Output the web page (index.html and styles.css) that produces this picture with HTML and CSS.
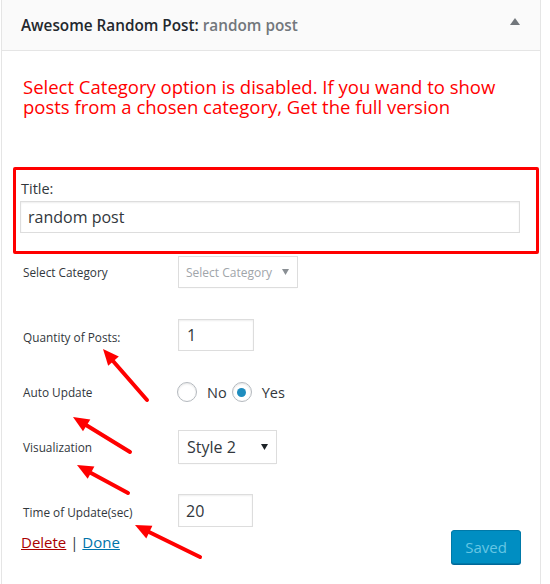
FILE: index.html
```html
<!DOCTYPE html>
<html lang="en">
<head>
<meta charset="utf-8">
<title>Awesome Random Post widget</title>
<link rel="stylesheet" href="styles.css">
</head>
<body>
<div class="widget">
  <div class="widget-top">
    <h3 class="widget-title">Awesome Random Post: <span class="in-title">random post</span></h3>
    <svg class="toggle" width="10" height="7" viewBox="0 0 10 7"><polygon points="5,0 10,7 0,7" fill="#72777c"/></svg>
  </div>
  <div class="widget-inside">
    <p class="notice">Select Category option is disabled. If you wand to show posts from a chosen category, Get the full version</p>

    <div class="title-field">
      <label class="title-label" for="t">Title:</label>
      <input id="t" class="text-input" type="text" value="random post">
    </div>

    <div class="fields">
      <div class="row row-cat">
        <span class="label">Select Category</span>
        <div class="select select-disabled">
          <span>Select Category</span>
          <svg class="caret" width="7" height="6" viewBox="0 0 7 6"><polygon points="0,0 7,0 3.5,6" fill="#8a8f94"/></svg>
        </div>
      </div>

      <div class="row row-qty">
        <span class="label label-low">Quantity of Posts:</span>
        <input class="num-input" type="text" value="1">
      </div>

      <div class="row row-auto">
        <span class="label">Auto Update</span>
        <div class="radios">
          <input class="radio" type="radio" name="au" id="no">
          <label class="radio-text" for="no">No</label>
          <input class="radio radio-yes" type="radio" name="au" id="yes" checked>
          <label class="radio-text" for="yes">Yes</label>
        </div>
      </div>

      <div class="row row-vis">
        <span class="label">Visualization</span>
        <div class="select select-style">
          <span>Style 2</span>
          <svg class="caret" width="7" height="6" viewBox="0 0 7 6"><polygon points="0,0 7,0 3.5,6" fill="#1d2327"/></svg>
        </div>
      </div>

      <div class="row row-time">
        <span class="label label-low">Time of Update(sec)</span>
        <input class="num-input num-time" type="text" value="20">
      </div>

      <div class="footer">
        <div class="links"><a class="delete" href="#">Delete</a> <span class="sep">|</span> <a class="done" href="#">Done</a></div>
        <button class="btn" type="button">Saved</button>
      </div>
    </div>
  </div>
</div>

<svg class="arrows" width="550" height="584" viewBox="0 0 550 584">
  <g stroke="#ff0000" stroke-width="4" stroke-linecap="round" fill="none">
    <line x1="147" y1="400" x2="113" y2="361"/>
    <line x1="130" y1="452" x2="86" y2="425"/>
    <line x1="128" y1="493" x2="91" y2="473"/>
    <line x1="200" y1="557" x2="149" y2="532"/>
  </g>
  <g fill="#ff0000">
    <polygon points="103,349 118.8,356.5 108.2,365.7"/>
    <polygon points="73,417 90.3,419.4 83,431.3"/>
    <polygon points="77,465 94.4,466.6 87.7,478.8"/>
    <polygon points="135,525 152.4,525.8 146.3,538.4"/>
  </g>
</svg>
</body>
</html>
```
FILE: styles.css
```css
* { box-sizing: border-box; }

body {
  margin: 0;
  background: #fff;
  font-family: "Open Sans", "Noto Sans", sans-serif;
  color: #32373c;
}

.widget {
  margin-left: 1px;
  width: 540px;
  min-height: 584px;
  border-left: 1px solid #e5e5e5;
  border-right: 1px solid #e5e5e5;
  background: #fff;
}

.widget-top {
  height: 51px;
  background: #fafafa;
  border-bottom: 1px solid #e5e5e5;
  display: flex;
  align-items: center;
  justify-content: space-between;
  padding: 0 20px 0 19px;
}

.widget-title {
  margin: 0;
  font-size: 15.3px;
  font-weight: 600;
  line-height: 20px;
  color: #23282d;
}

.in-title { color: #72777c; }

.toggle {
  display: block;
  margin-bottom: 7px;
}

.notice {
  margin: 26px 0 0;
  padding: 0 18px 0 21px;
  font-size: 18.5px;
  line-height: 20px;
  color: #ff0000;
}

.title-field {
  margin: 50px 0 0 11px;
  width: 526px;
  height: 87px;
  border: 3px solid #ff0000;
  border-radius: 2px;
  padding: 9px 0 0 4px;
}

.title-label {
  display: block;
  padding-left: 1px;
  font-size: 14.5px;
  line-height: 20px;
  color: #32373c;
}

.text-input {
  display: block;
  margin: 2px 0 0;
  width: 500px;
  height: 32px;
  border: 1px solid #ddd;
  border-radius: 0;
  box-shadow: inset 0 1px 2px rgba(0, 0, 0, 0.07);
  padding: 0 7px;
  font: 16px "Open Sans", sans-serif;
  color: #32373c;
  outline: none;
}

.fields { padding: 0 18px 0 21px; }

.row {
  display: flex;
  align-items: center;
}

.label {
  width: 155px;
  flex: none;
  font-size: 11.8px;
  line-height: 16px;
  color: #32373c;
}

.label-low { padding-top: 3px; }

.row-cat { margin-top: 2px; height: 32px; }
.row-qty { margin-top: 31px; height: 32px; }
.row-auto { margin-top: 31px; height: 20px; }
.row-vis { margin-top: 28px; height: 34px; }
.row-time { margin-top: 30px; height: 33px; }

.select {
  display: flex;
  align-items: center;
  justify-content: space-between;
  background: #fff;
  border: 1px solid #ddd;
  box-shadow: 0 1px 1px -1px rgba(0, 0, 0, 0.1);
}

.select-disabled {
  width: 120px;
  height: 32px;
  padding: 0 8px 0 7px;
  font-size: 12px;
  color: #a0a5aa;
}

.select-style {
  width: 99px;
  height: 34px;
  padding: 0 8px 0 8px;
  font-size: 16px;
  color: #32373c;
}

.caret { display: block; }

.num-input {
  width: 76px;
  height: 32px;
  margin: 0;
  border: 1px solid #ddd;
  border-radius: 0;
  box-shadow: inset 0 1px 2px rgba(0, 0, 0, 0.07);
  padding: 0 8px;
  font: 16px "Open Sans", sans-serif;
  color: #32373c;
  outline: none;
}

.num-time { width: 75px; height: 33px; padding-left: 7px; }

.radios {
  display: flex;
  align-items: center;
  font-size: 14.5px;
  color: #32373c;
  margin-left: -1px;
}

.radio {
  appearance: none;
  -webkit-appearance: none;
  position: relative;
  margin: 0;
  width: 20px;
  height: 20px;
  border: 1px solid #b4b9be;
  border-radius: 50%;
  background: #fff;
  box-shadow: inset 0 1px 2px rgba(0, 0, 0, 0.1);
}

.radio:checked::before {
  content: "";
  position: absolute;
  left: 4.5px;
  top: 4.5px;
  width: 9px;
  height: 9px;
  border-radius: 50%;
  background: #1e8cbe;
}

.radio-text { margin-left: 10px; }
.radio-yes { margin-left: 5px; }

.footer {
  margin-top: 3px;
  display: flex;
  justify-content: space-between;
  align-items: flex-start;
}

.links {
  margin: 2px 0 0 -2px;
  font-size: 15px;
  line-height: 20px;
  color: #32373c;
}

.delete { color: #a00; text-decoration: underline; }
.done { color: #0073aa; text-decoration: underline; }

.btn {
  width: 70px;
  height: 34px;
  margin: 0 1px 0 0;
  padding: 0;
  background: #008ec2;
  border: 1px solid #0079a8;
  border-radius: 3px;
  box-shadow: 0 1px 0 #006799;
  color: #66c6e4;
  font: 15px "Open Sans", sans-serif;
}

.arrows {
  position: absolute;
  left: 0;
  top: 0;
  pointer-events: none;
}
```
